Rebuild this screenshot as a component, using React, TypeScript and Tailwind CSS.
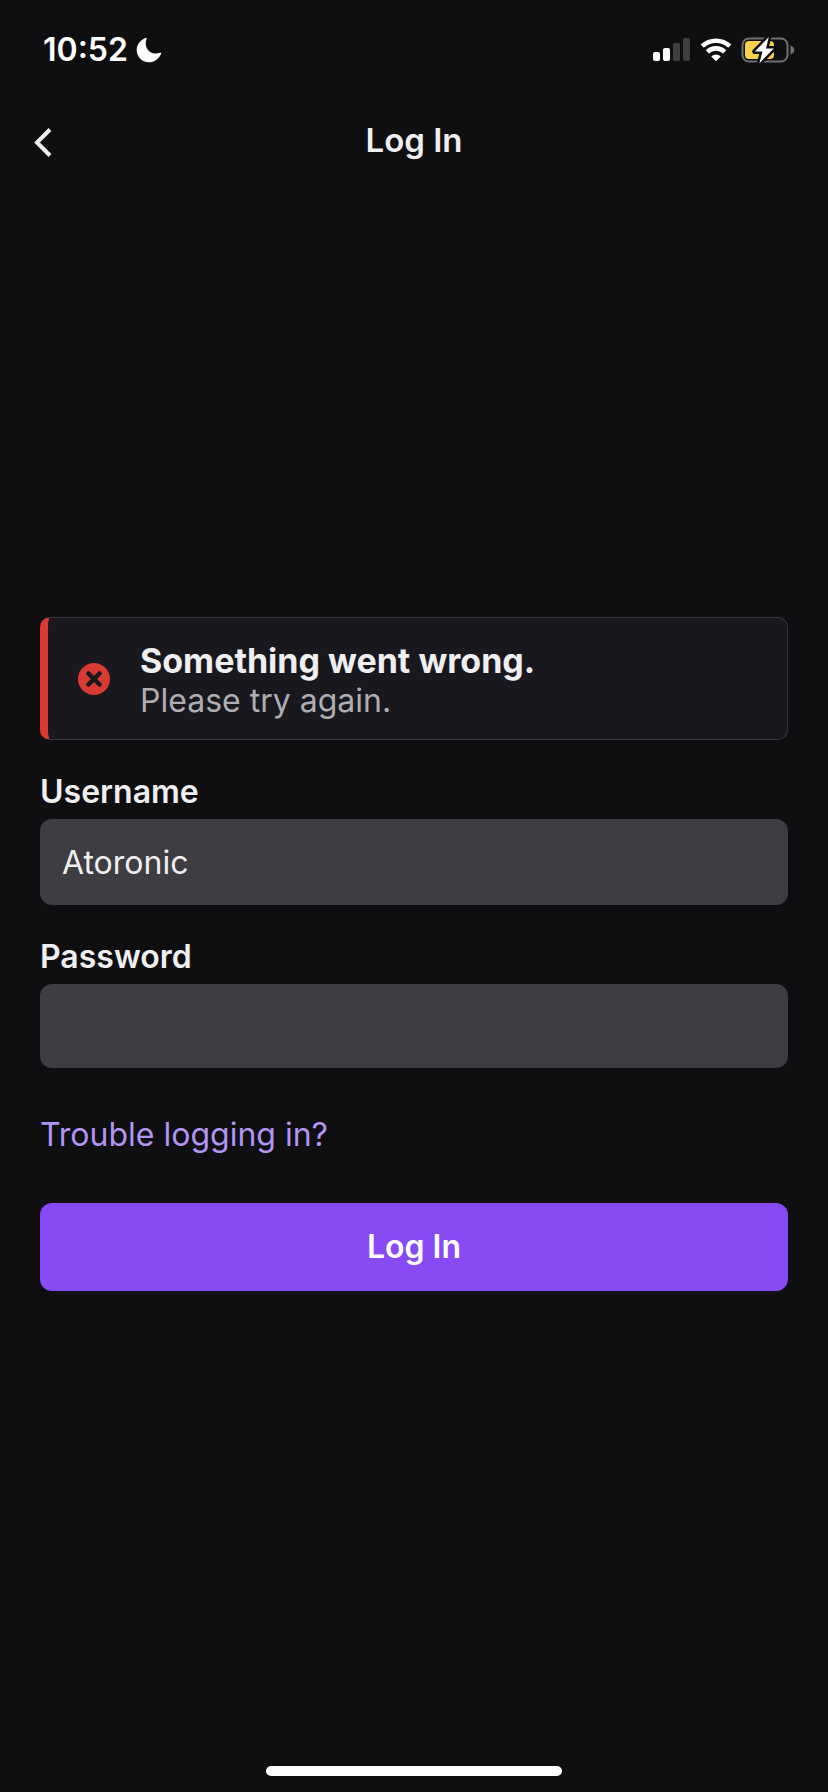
import { useState } from "react";
import type { FormEvent } from "react";

const signalBars = [
  { x: 0, y: 14, height: 9, active: true },
  { x: 10, y: 10, height: 13, active: true },
  { x: 20, y: 5, height: 18, active: false },
  { x: 30, y: 0, height: 23, active: false },
];

function StatusBar() {
  return (
    <div className="flex h-[100px] items-center justify-between pl-[43px] pr-[33px] text-white">
      <div className="flex items-center gap-2">
        <span className="text-[32px] font-semibold leading-10">10:52</span>
        <svg width="26" height="26" viewBox="0 0 26 26" fill="currentColor" aria-label="Focus on">
          <path d="M9.4 1C10.2.5 10.9 1 10.5 2C8.8 6.8 10 11.200 13 14C16 16.700 20 17.300 24 15.800C25 15.400 25.400 16 25 16.900C22.800 22 18.200 25.200 13 25.200C6 25.200.7 19.800.7 13C.7 7.800 4.200 3.200 9.400 1Z" />
        </svg>
      </div>
      <div className="flex items-center gap-[9px]">
        <svg width="38" height="24" viewBox="0 0 38 24" aria-label="Signal">
          {signalBars.map((bar) => (
            <rect
              key={bar.x}
              x={bar.x}
              y={bar.y}
              width="7"
              height={bar.height}
              rx="2"
              fill={bar.active ? "#ffffff" : "#3f3f40"}
            />
          ))}
        </svg>
        <svg width="32" height="24" viewBox="0 0 32 24" aria-label="Wi-Fi">
          <g fill="none" stroke="#ffffff" strokeWidth="4.6">
            <path d="M2.200 8.200A20 20 0 0 1 29.800 8.200" />
            <path d="M7.400 13.900A12.300 12.300 0 0 1 24.600 13.900" />
          </g>
          <path d="M16 23.200L11.200 18.500A6.800 6.800 0 0 1 20.800 18.500Z" fill="#ffffff" />
        </svg>
        <svg width="54" height="32" viewBox="0 0 54 32" aria-label="Battery charging">
          <rect x="1.500" y="4.500" width="45" height="23" rx="6.500" fill="none" stroke="#707071" strokeWidth="2" />
          <path d="M49.500 11.500C54.500 13 54.500 19 49.500 20.500Z" fill="#707071" />
          <rect x="4" y="7" width="29" height="18" rx="4" fill="#f8d04a" />
          <path
            d="M27.800 3L13.800 17.600H21.400L18.400 29.200L32.800 14.400H25Z"
            fill="#ffffff"
            stroke="#0f0e10"
            strokeWidth="5"
            strokeLinejoin="round"
            paintOrder="stroke"
          />
        </svg>
      </div>
    </div>
  );
}

function Header() {
  return (
    <header className="grid h-20 grid-cols-[1fr_auto_1fr] items-center px-8">
      <button type="button" aria-label="Back" className="w-6">
        <svg width="22" height="36" viewBox="0 0 22 36" fill="none" stroke="#efeff1" strokeWidth="4">
          <path d="M18 7.500L5 20.500L18 33.500" />
        </svg>
      </button>
      <h1 className="text-[33px] font-semibold leading-10">Log In</h1>
    </header>
  );
}

function ErrorAlert() {
  return (
    <div
      role="alert"
      className="flex items-center gap-[30px] rounded-[10px] border border-l-8 border-[#38373c] border-l-[#d93a31] bg-[#19181e] py-[18px] pl-[30px]"
    >
      <svg width="32" height="32" viewBox="0 0 32 32" className="shrink-0">
        <circle cx="16" cy="16" r="16" fill="#d93a31" />
        <path
          d="M10.500 10.500L21.500 21.500M21.500 10.500L10.500 21.500"
          stroke="#19181e"
          strokeWidth="4.500"
          strokeLinecap="round"
        />
      </svg>
      <div className="pt-[5px]">
        <p className="text-[34px] font-bold leading-10">Something went wrong.</p>
        <p className="text-[32px] leading-10 text-[#adadb3]">Please try again.</p>
      </div>
    </div>
  );
}

export default function App() {
  const [username, setUsername] = useState("Atoronic");
  const [password, setPassword] = useState("");

  const handleSubmit = (event: FormEvent) => event.preventDefault();

  return (
    <div className="flex min-h-screen flex-col bg-[#0f0e10] font-['Inter',sans-serif] text-[#efeff1]">
      <StatusBar />
      <Header />

      <main className="flex flex-1 flex-col justify-center px-10">
        <ErrorAlert />

        <form onSubmit={handleSubmit} className="mt-8 flex flex-col">
          <label htmlFor="username" className="text-[32px] font-semibold leading-10">
            Username
          </label>
          <input
            id="username"
            type="text"
            value={username}
            onChange={(e) => setUsername(e.target.value)}
            className="mt-[7px] h-[86px] w-full rounded-xl bg-[#3e3d41] px-[22px] text-[32px] outline-none"
          />

          <label htmlFor="password" className="mt-8 text-[32px] font-semibold leading-10">
            Password
          </label>
          <input
            id="password"
            type="password"
            value={password}
            onChange={(e) => setPassword(e.target.value)}
            className="mt-[7px] h-[84px] w-full rounded-xl bg-[#3e3d41] px-[22px] text-[32px] outline-none"
          />

          <a href="#" className="mt-[47px] self-start text-[32px] leading-10 text-[#b294f5]">
            Trouble logging in?
          </a>

          <button type="submit" className="mt-12 h-[88px] rounded-xl bg-[#874af5] text-[32px] font-semibold text-white">
            Log In
          </button>
        </form>
      </main>

      {/* Home indicator */}
      <div className="flex h-16 items-end justify-center pb-4">
        <div className="h-[10px] w-[296px] rounded-full bg-white" />
      </div>
    </div>
  );
}
